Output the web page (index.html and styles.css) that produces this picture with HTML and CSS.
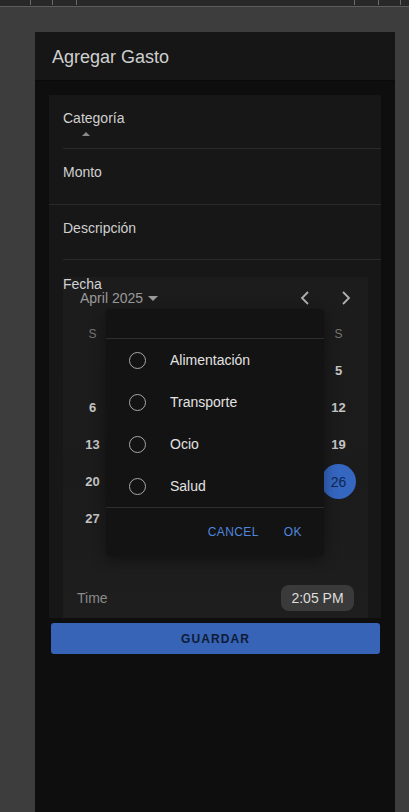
FILE: index.html
```html
<!DOCTYPE html>
<html lang="es">
<head>
<meta charset="utf-8">
<title>Agregar Gasto</title>
<link rel="stylesheet" href="styles.css">
</head>
<body>
<div class="topstrip">
  <span class="tick t1"></span><span class="tick t2"></span><span class="tick t3"></span>
  <span class="spacer"></span>
  <span class="tick t4"></span><span class="tick t5"></span><span class="tick t6"></span>
</div>
<div class="phone">
  <header class="appbar">Agregar Gasto</header>
  <main class="content">
    <section class="card">
      <div class="field">
        <div class="label">Categoría</div>
        <span class="caret-up"></span>
      </div>
      <div class="field full">
        <div class="label">Monto</div>
      </div>
      <div class="field">
        <div class="label">Descripción</div>
      </div>
      <div class="calendar">
        <div class="fecha">Fecha</div>
        <div class="cal-head">
          <div class="month">April 2025 <span class="caret-down"></span></div>
          <div class="navs">
            <svg width="12" height="16" viewBox="0 0 12 16"><path d="M9 2 L3 8 L9 14" fill="none" stroke="#b0b0b0" stroke-width="1.8"/></svg>
            <svg width="12" height="16" viewBox="0 0 12 16"><path d="M3 2 L9 8 L3 14" fill="none" stroke="#b0b0b0" stroke-width="1.8"/></svg>
          </div>
        </div>
        <div class="grid">
          <span class="wd">S</span><span class="wd">M</span><span class="wd">T</span><span class="wd">W</span><span class="wd">T</span><span class="wd">F</span><span class="wd">S</span>
          <span></span><span></span><span>1</span><span>2</span><span>3</span><span>4</span><span>5</span>
          <span>6</span><span>7</span><span>8</span><span>9</span><span>10</span><span>11</span><span>12</span>
          <span>13</span><span>14</span><span>15</span><span>16</span><span>17</span><span>18</span><span>19</span>
          <span>20</span><span>21</span><span>22</span><span>23</span><span>24</span><span>25</span><span class="sel">26</span>
          <span>27</span><span>28</span><span>29</span><span>30</span><span></span><span></span><span></span>
        </div>
        <div class="time-row">
          <span class="time-label">Time</span>
          <span class="time-chip">2:05 PM</span>
        </div>
        <div class="dialog">
          <div class="dialog-title"></div>
          <ul class="options">
            <li><span class="radio"></span><span>Alimentación</span></li>
            <li><span class="radio"></span><span>Transporte</span></li>
            <li><span class="radio"></span><span>Ocio</span></li>
            <li><span class="radio"></span><span>Salud</span></li>
          </ul>
          <div class="actions">
            <span class="btn">CANCEL</span>
            <span class="btn">OK</span>
          </div>
        </div>
      </div>
    </section>
    <button class="save">GUARDAR</button>
  </main>
</div>
</body>
</html>
```
FILE: styles.css
```css
* { box-sizing: border-box; }
html, body { margin: 0; padding: 0; }
body {
  background: #3d3d3d;
  font-family: "Liberation Sans", Arial, sans-serif;
  height: 812px;
  overflow: hidden;
}
.topstrip {
  height: 7px;
  background: #282828;
  border-bottom: 1px solid #5e5e5e;
  display: flex;
  align-items: flex-start;
}
.tick { width: 1px; height: 5px; background: #6a6a6a; }
.t1 { margin-left: 30px; }
.t2 { margin-left: 21px; }
.t3 { margin-left: 23px; }
.spacer { flex: 1; }
.t4 { margin-right: 23px; }
.t5 { margin-right: 21px; }
.t6 { margin-right: 8px; }

.phone {
  margin: 25px 0 0 35px;
  width: 360px;
  height: 780px;
  background: #0e0e0e;
  display: flex;
  flex-direction: column;
}
.appbar {
  height: 49px;
  background: #161616;
  border-bottom: 1px solid #0a0a0a;
  color: #cfcfcf;
  font-size: 18px;
  padding: 15px 0 0 17px;
}
.content {
  padding: 14px 14px 0 14px;
}
.card {
  background: #171717;
  padding: 0 13px 0 0;
}
.field {
  height: 55px;
  margin-left: 14px;
  border-bottom: 1px solid #2a2a2a;
  padding-top: 14px;
  position: relative;
  margin-right: -13px;
}
.field:first-child { height: 54px; }
.field.full { margin-left: 0; padding-left: 14px; height: 56px; }
.label {
  color: #d0d0d0;
  font-size: 14px;
  line-height: 18px;
}
.caret-up {
  display: block;
  width: 0; height: 0;
  margin: 5px 0 0 19px;
  border-left: 4px solid transparent;
  border-right: 4px solid transparent;
  border-bottom: 4px solid #8a8a8a;
}
.calendar {
  margin: 17px 0 0 14px;
  background: linear-gradient(180deg, #1c1c1c 0%, #1b1b1b 60%, #1e1e1e 100%);
  position: relative;
  padding-bottom: 7px;
}
.fecha {
  position: absolute;
  left: 0; top: -1px;
  color: #d2d2d2;
  font-size: 14px;
  line-height: 16px;
}
.cal-head {
  height: 42px;
  display: flex;
  align-items: center;
  justify-content: space-between;
  padding: 0 16px 0 17px;
}
.month {
  color: #9a9a9a;
  font-size: 14px;
  display: flex;
  align-items: center;
  gap: 5px;
}
.caret-down {
  width: 0; height: 0;
  border-left: 5px solid transparent;
  border-right: 5px solid transparent;
  border-top: 5px solid #9a9a9a;
}
.navs { display: flex; gap: 29px; align-items: center; }
.navs svg { display: block; }
.grid {
  display: grid;
  grid-template-columns: repeat(7, 41px);
  grid-auto-rows: 37px;
  justify-content: center;
  margin-top: -4px;
}
.grid span {
  display: flex;
  align-items: center;
  justify-content: center;
  color: #c4c4c4;
  font-size: 13px;
  font-weight: bold;
}
.grid .wd {
  color: #747474;
  font-weight: normal;
  font-size: 12px;
}
.grid .sel {
  width: 35px;
  height: 35px;
  justify-self: center;
  align-self: center;
  border-radius: 50%;
  background: #3566c0;
  color: #102650;
  font-weight: normal;
  font-size: 14px;
}
.time-row {
  display: flex;
  justify-content: space-between;
  align-items: center;
  padding: 0 14px;
  margin-top: 48px;
}
.time-label { color: #8a8a8a; font-size: 14px; }
.time-chip {
  width: 73px;
  height: 26px;
  border-radius: 8px;
  background: #3a3a3a;
  color: #dddddd;
  font-size: 14px;
  display: flex;
  align-items: center;
  justify-content: center;
}
.dialog {
  position: absolute;
  left: 43px;
  top: 32px;
  width: 218px;
  height: 247px;
  background: #131313;
  border-radius: 4px;
  box-shadow: 0 4px 14px rgba(0,0,0,0.4);
  display: flex;
  flex-direction: column;
}
.dialog-title {
  height: 30px;
  border-bottom: 1px solid #2e2e2e;
}
.options {
  list-style: none;
  margin: 0;
  padding: 0;
  border-bottom: 1px solid #2e2e2e;
}
.options li {
  height: 42px;
  display: flex;
  align-items: center;
  color: #e2e2e2;
  font-size: 14px;
}
.radio {
  width: 17px;
  height: 17px;
  border: 1.5px solid #a8a8a8;
  border-radius: 50%;
  margin: 0 24px 0 23px;
}
.actions {
  flex: 1;
  display: flex;
  justify-content: flex-end;
  align-items: center;
  gap: 25px;
  padding: 0 22px 0 0;
}
.btn {
  color: #4f86dc;
  font-size: 12px;
  letter-spacing: 0.4px;
}
.save {
  margin: 5px 1px 0 2px;
  width: 329px;
  height: 31px;
  border: none;
  border-radius: 3px;
  background: #3764b7;
  color: #0e1b36;
  font-family: "Liberation Sans", Arial, sans-serif;
  font-size: 12px;
  font-weight: bold;
  letter-spacing: 1.1px;
  display: block;
}
```
